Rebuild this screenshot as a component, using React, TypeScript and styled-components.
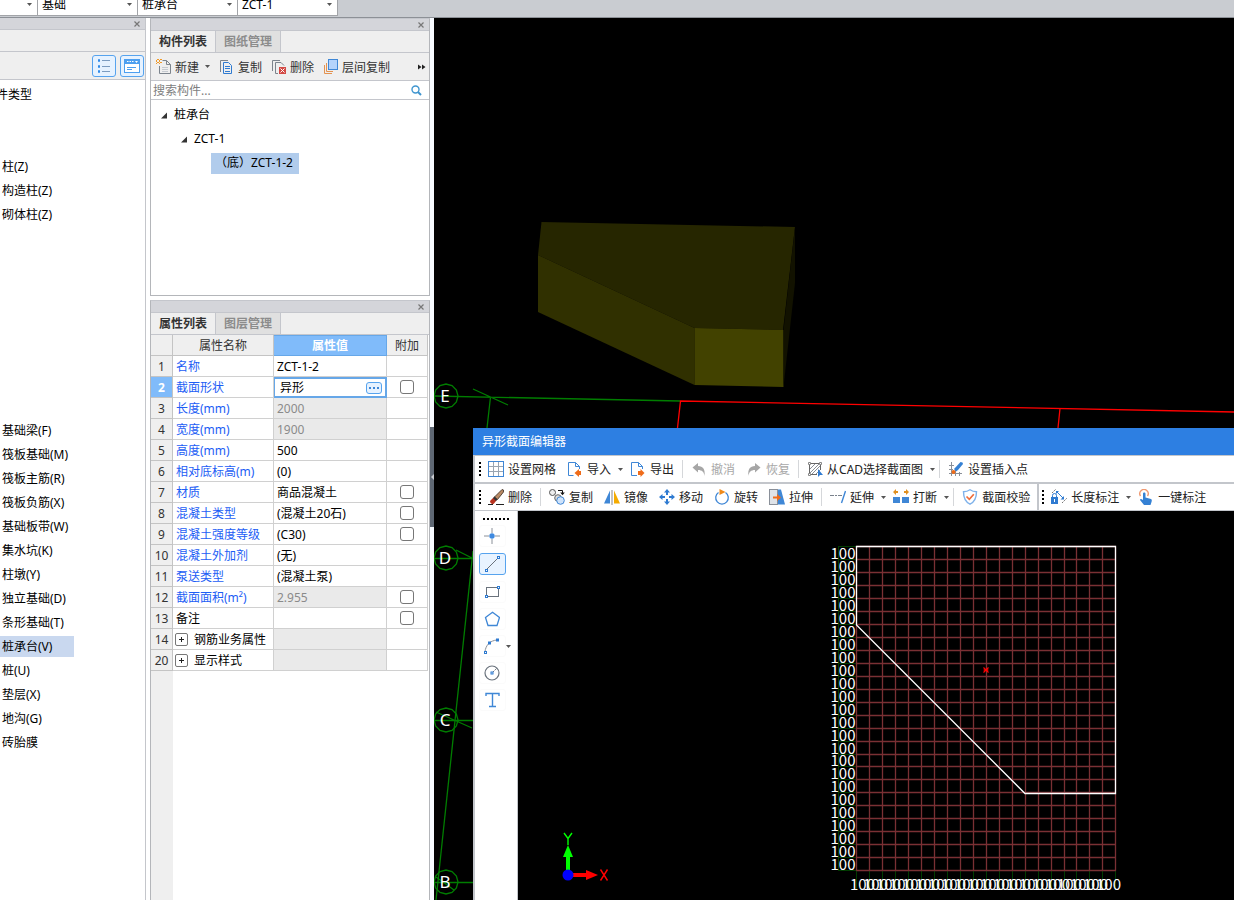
import React from 'react';
import styled, { createGlobalStyle, css } from 'styled-components';

const Global = createGlobalStyle`
  * { box-sizing: border-box; }
  html, body, #root { height: 100%; }
  body {
    margin: 0;
    background: #fff;
    color: #000;
    font: 12px/20px "Noto Sans", "Noto Sans CJK SC", sans-serif;
    overflow: hidden;
  }
  button, select, input { font: inherit; color: inherit; }
`;

const Page = styled.div`
  display: flex;
  flex-direction: column;
  height: 100vh;
`;

const TopBar = styled.header`
  display: flex;
  flex: none;
  height: 18px;
  overflow: hidden;
  background: #c9ccd1;
  border-bottom: 1px solid #8c9096;
`;

const ComboBox = styled.label<{ $narrow?: boolean }>`
  position: relative;
  display: flex;
  flex: none;
  width: ${(p) => (p.$narrow ? 38 : 100)}px;
  height: 22px;
  margin-top: -6px;
  background: #fff;
  border: solid #a2a4a8;
  border-width: 0 1px 1px 0;
  select {
    appearance: none;
    width: 100%;
    padding: 0 14px 0 4px;
    border: 0;
    background: transparent;
    line-height: 20px;
  }
  svg { position: absolute; right: 5px; top: 9px; }
`;

const Workspace = styled.main`
  display: flex;
  flex: 1;
  min-height: 0;
`;

const TypePanel = styled.aside`
  display: flex;
  flex-direction: column;
  flex: none;
  width: 146px;
  border-right: 1px solid #c4c6cb;
  overflow: hidden;
`;

const PanelHead = styled.div`
  display: flex;
  flex: none;
  justify-content: flex-end;
  align-items: center;
  height: 12px;
  padding-right: 4px;
  background: #d4d5da;
  border-bottom: 1px solid #c4c6cc;
`;

const CloseButton = styled.button`
  display: flex;
  padding: 0;
  border: 0;
  background: none;
`;

const TypeStrip = styled.div`
  flex: none;
  height: 22px;
  background: #efefef;
  border-bottom: 1px solid #c4c6cc;
`;

const TypeTools = styled.div`
  display: flex;
  flex: none;
  justify-content: flex-end;
  align-items: center;
  gap: 4px;
  height: 28px;
  padding-right: 1px;
  background: #efefef;
  border-bottom: 1px solid #c4c6cc;
`;

const ViewToggle = styled.button`
  display: flex;
  align-items: center;
  justify-content: center;
  width: 24px;
  height: 22px;
  padding: 0;
  background: #e6f2ff;
  border: 1px solid #56a3ee;
  border-radius: 3px;
`;

const TypeList = styled.ul<{ $space?: number }>`
  flex: none;
  margin: ${(p) => p.$space ?? 0}px 0 0;
  padding: 0;
  list-style: none;
`;

const TypeItem = styled.li<{ $selected?: boolean; $cut?: boolean }>`
  width: 74px;
  height: 21px;
  margin-bottom: 3px;
  padding: 1px 0 0 2px;
  white-space: nowrap;
  background: ${(p) => (p.$selected ? '#c9d8ef' : 'transparent')};
  ${(p) => p.$cut && css`
    padding-left: 0;
    margin-left: -4px;
  `}
`;

const DockColumn = styled.section`
  display: flex;
  flex-direction: column;
  flex: none;
  gap: 4px;
  width: 280px;
  margin-left: 4px;
`;

const Dock = styled.div<{ $fill?: boolean }>`
  display: flex;
  flex-direction: column;
  flex: ${(p) => (p.$fill ? '1' : 'none')};
  min-height: 0;
  border: 1px solid #b4b6ba;
  border-top-color: #c4c6cc;
  ${(p) => p.$fill && css`border-bottom: 0;`}
`;

const Tabs = styled.div`
  display: flex;
  flex: none;
  height: 22px;
  background: #efefef;
  border-bottom: 1px solid #c4c6cc;
`;

const Tab = styled.button<{ $active?: boolean }>`
  width: 65px;
  padding: 1px 0 0;
  border: 0;
  border-right: 1px solid #c4c6cc;
  font-weight: 700;
  line-height: 20px;
  color: ${(p) => (p.$active ? '#333' : '#8c8c8c')};
  background: ${(p) => (p.$active ? '#efefef' : '#e0e0e0')};
`;

const ListTools = styled.div`
  display: flex;
  flex: none;
  align-items: center;
  height: 28px;
  padding-left: 5px;
  background: #efefef;
  border-bottom: 1px solid #c4c6cc;
`;

const ListTool = styled.button`
  display: flex;
  align-items: center;
  gap: 3px;
  margin-right: 9px;
  padding: 0;
  border: 0;
  background: none;
  color: #333;
  white-space: nowrap;
  span { padding-top: 2px; }
  .caret { margin-left: 3px; }
`;

const MoreButton = styled(ListTool)`
  margin: 0 3px 0 auto;
`;

const SearchRow = styled.label`
  display: flex;
  flex: none;
  align-items: center;
  height: 19px;
  padding: 0 7px 0 2px;
  border-bottom: 1px solid #c4c6cc;
  input {
    flex: 1;
    min-width: 0;
    height: 18px;
    padding: 1px 0 0;
    border: 0;
    outline: 0;
    background: transparent;
  }
  input::placeholder { color: #808080; opacity: 1; }
`;

const Tree = styled.ul`
  height: 195px;
  margin: 0;
  padding: 3px 0 0;
  list-style: none;
`;

const TreeItem = styled.li<{ $level: number }>`
  display: flex;
  align-items: center;
  gap: 6px;
  height: 24px;
  padding-left: ${(p) => 10 + p.$level * 20}px;
`;

const TreePick = styled.span`
  height: 21px;
  margin-left: 10px;
  padding: 0 6px 0 4px;
  background: #b1ccec;
`;

const PropertyArea = styled.div`
  flex: 1;
  background: linear-gradient(to right, #efefef 22px, #fff 22px);
`;

const PropertyTable = styled.table`
  width: 277px;
  table-layout: fixed;
  border-collapse: separate;
  border-spacing: 0;
  th, td {
    height: 21px;
    padding: 2px 0 0 3px;
    border: solid #d0d0d0;
    border-width: 0 1px 1px 0;
    line-height: 18px;
    font-weight: 400;
    text-align: left;
    white-space: nowrap;
    overflow: hidden;
  }
  thead th {
    padding: 2px 0 0;
    text-align: center;
    color: #333;
    background: #efefef;
    border-color: #c4c4c4;
  }
`;

const ValueHead = styled.th`
  && {
    color: #fff;
    font-weight: 700;
    background: #80bbfa;
    border-color: #66a7e8;
    box-shadow: inset 0 1px #66a7e8;
  }
`;

const RowNumber = styled.th<{ $selected?: boolean }>`
  && {
    padding: 2px 0 0;
    text-align: center;
    color: ${(p) => (p.$selected ? '#fff' : '#333')};
    font-weight: ${(p) => (p.$selected ? 700 : 400)};
    background: ${(p) => (p.$selected ? '#80bbfa' : '#efefef')};
    border-color: #c4c4c4;
  }
`;

const NameCell = styled.td<{ $plain?: boolean }>`
  color: ${(p) => (p.$plain ? '#000' : '#1c5df5')};
`;

const NameInner = styled.div`
  display: flex;
  align-items: center;
  gap: 6px;
  height: 18px;
`;

const Expander = styled.button`
  display: flex;
  align-items: center;
  justify-content: center;
  width: 13px;
  height: 13px;
  margin: 0 0 2px -1px;
  padding: 0;
  background: #fff;
  border: 1px solid #777;
  border-radius: 2px;
`;

const ValueCell = styled.td<{ $locked?: boolean }>`
  color: ${(p) => (p.$locked ? '#8a8a8a' : '#000')};
  background: ${(p) => (p.$locked ? '#eaeaea' : '#fff')};
`;

const EditCell = styled.td`
  && {
    padding: 0;
    border-color: #66a7e8;
  }
`;

const Editor = styled.div`
  display: flex;
  align-items: center;
  height: 20px;
  padding: 0 3px 0 5px;
  border: solid #66a7e8;
  border-width: 2px 1px 1px;
  input {
    flex: 1;
    min-width: 0;
    height: 16px;
    padding: 0;
    border: 0;
    outline: 0;
  }
  button {
    display: flex;
    align-items: center;
    justify-content: center;
    width: 16px;
    height: 12px;
    padding: 0;
    background: #e6f2ff;
    border: 1px solid #56a3ee;
    border-radius: 3px;
  }
`;

const CheckCell = styled.td`
  && {
    padding: 0;
    background: #fff;
  }
  input {
    appearance: none;
    display: block;
    width: 14px;
    height: 14px;
    margin: 0 auto;
    background: #fff;
    border: 1px solid #777;
    border-radius: 3px;
  }
`;

const Splitter = styled.div`
  flex: none;
  width: 4px;
  padding-top: 409px;
  background: #f7faff;
`;

const SplitHandle = styled.button`
  display: flex;
  align-items: center;
  justify-content: center;
  width: 4px;
  height: 100px;
  padding: 0;
  border: 0;
  background: #5f6874;
`;

const Viewport = styled.section`
  position: relative;
  flex: 1;
  min-width: 0;
  overflow: hidden;
  background: #000;
`;

const Scene = styled.svg`
  display: block;
  width: 100%;
  height: 100%;
`;

const Dialog = styled.section`
  position: absolute;
  top: 410px;
  right: 0;
  bottom: 0;
  left: 39px;
  display: flex;
  flex-direction: column;
  overflow: hidden;
`;

const DialogTitle = styled.h2`
  flex: none;
  height: 27px;
  margin: 0;
  padding-left: 9px;
  color: #fff;
  background: #2d7fe2;
  font-size: 12px;
  font-weight: 400;
  line-height: 28px;
`;

const ToolRow = styled.div`
  display: flex;
  flex: none;
  align-items: stretch;
  height: 28px;
  padding-left: 4px;
  background: #fff;
  border: solid #c3c6cb;
  border-width: 1px 0 1px 2px;
`;

const Grip = styled.span<{ $across?: boolean }>`
  flex: none;
  align-self: center;
  width: ${(p) => (p.$across ? 27 : 2)}px;
  height: ${(p) => (p.$across ? 2 : 14)}px;
  background: repeating-linear-gradient(
    ${(p) => (p.$across ? 'to right' : 'to bottom')},
    #000 0 2px, transparent 2px 4px
  );
  ${ToolRow} > & { margin-right: 1px; }
`;

const ToolButton = styled.button<{ $menu?: boolean }>`
  display: flex;
  flex: none;
  align-items: center;
  gap: 4px;
  padding: 0 ${(p) => (p.$menu ? 1 : 5)}px 0 6px;
  border: 0;
  background: none;
  color: #222;
  white-space: nowrap;
  &:disabled { color: #a8a8a8; }
  span { padding-top: 2px; }
  .caret { margin-left: 3px; }
`;

const ToolSeparator = styled.span`
  flex: none;
  align-self: center;
  width: 1px;
  height: 18px;
  margin: 0 2px 0 3px;
  background: #d5d7da;
`;

const BarEdge = styled.span`
  flex: none;
  width: 2px;
  margin: 0 3px 0 2px;
  background: #c3c6cb;
`;

const DialogBody = styled.div`
  display: flex;
  flex: 1;
  min-height: 0;
`;

const ShapeBar = styled.div`
  display: flex;
  flex: none;
  flex-direction: column;
  gap: 5px;
  width: 45px;
  padding: 7px 0 0 4px;
  background: #fff;
  border: solid #c3c6cb;
  border-width: 0 1px 0 2px;
  ${Grip} { align-self: flex-start; margin-left: 4px; }
`;

const ShapeRow = styled.div<{ $active?: boolean }>`
  display: flex;
  align-items: center;
  margin: ${(p) => (p.$active ? 1 : 0)}px 0;
`;

const ShapeButton = styled.button<{ $active?: boolean }>`
  display: flex;
  align-items: center;
  justify-content: center;
  width: 27px;
  height: 22px;
  padding: 0 2px 0 0;
  border: 1px solid ${(p) => (p.$active ? '#56a3ee' : '#fbfbfb')};
  border-radius: 3px;
  background: ${(p) => (p.$active ? '#e8f3ff' : '#fff')};
`;

const SketchArea = styled.div`
  flex: 1;
  min-width: 0;
  background: #000;
`;

/* ---------- icons ---------- */

const Caret = () => (
  <svg className="caret" width="5" height="3" viewBox="0 0 5 3"><path d="M0 0h5L2.5 3z" fill="#555" /></svg>
);

const CloseIcon = () => (
  <svg width="8" height="8" viewBox="0 0 8 8"><path d="M1.5 1.5l5 5M6.5 1.5l-5 5" stroke="#777" strokeWidth="1.2" /></svg>
);

const TreeArrow = () => (
  <svg width="7" height="7" viewBox="0 0 7 7"><path d="M6 0.5v6H0z" fill="#333" /></svg>
);

const Icon = ({ children }: { children: React.ReactNode }) => (
  <svg width="16" height="16" viewBox="0 0 16 16" fill="none">{children}</svg>
);

const icons: Record<string, React.ReactNode> = {
  grid: <><path d="M1 5.5h14M1 10.5h14M5.5 1v14M10.5 1v14" stroke="#9aa5b1" /><rect x=".5" y=".5" width="15" height="15" stroke="#3f87d6" /></>,
  import: <><path d="M6.5 14.5h-5V1.5h7l4 4V8M8.500 1.500v4h4" stroke="#3f87d6" /><path d="M14 10h-2V8l-4.500 4 4.500 4v-2h2z" fill="#ef6c1a" /></>,
  export: <><path d="M7 14.5H1.5V1.500h7l4 4V8M8.500 1.500v4h4" stroke="#3f87d6" /><path d="M8 10h2.500V8l4 4-4 4v-2H8z" fill="#ef6c1a" /></>,
  undo: <path d="M1.500 6.500L7 2v3c5 0 7.500 3.500 6.500 10-.4-4-2.500-6-6.500-6v2.500z" fill="#a6a6a6" />,
  redo: <path d="M14.500 6.500L9 2v3c-5 0-7.500 3.500-6.500 10 .4-4 2.500-6 6.500-6v2.500z" fill="#a6a6a6" />,
  cad: <><path d="M2.500 3v10M13.500 3v6M3 2.500h10M3 13.500h7" stroke="#666" /><path d="M3 8l5-5M3 12l9-9M5 13l8-8M9 13l4-4" stroke="#8a8f96" /><path d="M1.500 1.500h2v2h-2zM12.500 1.500h2v2h-2zM1.500 12.500h2v2h-2z" fill="#fff" stroke="#888" /><path d="M11 8v8l2-2h3z" fill="#2f7bd1" /></>,
  insert: <><path d="M3.500 1v14M7.500 9v6M11.500 11v4M1 4.500h5M1 8.500h4M1 12.500h13" stroke="#8a9099" /><path d="M14.500 1.500L12.500 1 6 8l2 2.500L10 9l5-6z" fill="#3581d4" /><circle cx="5.500" cy="11" r="2" fill="#ef6c1a" /></>,
  erase: <><path d="M15.500 1L14 .5 6.500 8l3 2.500L15.500 3z" fill="#b98a64" stroke="#3b2c22" strokeWidth=".8" /><path d="M5.500 8.500l3 3-3 3.500C4 15 2 14.500 2 12z" fill="#b8321e" /><path d="M5 9l3 3 1.500-1.500-3-3z" fill="#333" /><path d="M0 15.500h5M8 15.500h8" stroke="#222" /></>,
  copy: <><circle cx="3.500" cy="3.500" r="3" stroke="#555" fill="#eee" /><circle cx="9" cy="9" r="3.300" stroke="#666" fill="#ddd" /><circle cx="11.500" cy="11.500" r="3.800" stroke="#3f87d6" fill="#cfe3fa" /><path d="M9 1.500h4.500V4" stroke="#111" /><path d="M11.200 3.500h4.600l-2.300 2.800z" fill="#111" /></>,
  mirror: <><path d="M6 1.500v13H0z" fill="#3f87d6" /><path d="M10 1.500v13h6z" fill="#f5ab00" /><path d="M8 1v15" stroke="#888" /></>,
  move: <path d="M8 0l3 3.500H9V6H7V3.500H5zM8 16l3-3.500H9V10H7v2.500H5zM0 8l3.500-3v2H6v2H3.500v2zM16 8l-3.500-3v2H10v2h2.500v2z" fill="#2f7bd1" />,
  rotate: <><path d="M11.500 3.500a6.300 6.300 0 1 1-7 0" stroke="#3f87d6" strokeWidth="1.300" /><path d="M5.500 0l6 3L5.500 6z" fill="#ef8a1a" /></>,
  stretch: <><rect x=".5" y=".5" width="8" height="15" stroke="#8a9099" fill="#dfe3e8" /><path d="M9 .5h3l4 15H9z" fill="#3f87d6" /><path d="M4 7.500h4V5l4 3.500L8 12V9.500H4z" fill="#ef6c1a" /></>,
  extend: <><path d="M0 6.500h4M5 6.500h2M8 6.500h4" stroke="#7a828c" /><path d="M15.500 2l-4 12" stroke="#3f87d6" strokeWidth="1.400" /></>,
  break: <><path d="M0 8h7v6H0zM9 8h7v6H9z" fill="#3f87d6" /><path d="M0 3l3-3v2h2v2H3v2zM16 3l-3-3v2h-2v2h2v2z" fill="#e09020" /></>,
  verify: <><path d="M8 .8c2 1.400 4.300 2 6.500 2 0 6-1.500 10-6.500 12.400C3 12.800 1.500 8.800 1.500 2.800 3.700 2.800 6 2.200 8 .8z" stroke="#7fb2ea" strokeWidth="1.400" /><path d="M4.500 7.500L7.300 10.300l4.500-5" stroke="#ef6c3a" strokeWidth="1.700" /></>,
  length: <><path d="M0 8h7v7H0z" fill="#2f7bd1" /><path d="M1.500 8V6.500a2 2 0 0 1 4 0V8" stroke="#2f7bd1" /><path d="M3 10h1v3H3z" fill="#fff" /><path d="M1 4l4-4M11 14l5-5" stroke="#777" strokeDasharray="2 1" /><path d="M6 3l6 6" stroke="#2f7bd1" /><path d="M5 2h3l-3 3zM13 10.500v-3.500l-3.500 3.500z" fill="#2f7bd1" /></>,
  touch: <><path d="M2.500 7A4.200 4.200 0 1 1 9.500 7" stroke="#f09a72" strokeWidth="1.400" /><path d="M5 4.500c0-1.500 2.500-1.500 2.500 0v4l5.500 1.500c1 .5 1 1.500.5 3l-1 3H6L2 11c0-1 1-1.500 3 0z" fill="#3581d4" /></>,
  newFile: <><path d="M6.500 1.500h4l4 4v9h-11V7M10.500 1.500v4h4" stroke="#7c848d" /><path d="M6 8.500h6M6 10.500h6M6 12.500h6" stroke="#c5cad0" /><path d="M1 0h2v1H1zM4 0h2v1H4zM0 1h1v2H0zM3 1h1v2H3zM1 3h2v1H1zM4 3h2v1H4zM0 4h1v1H0zM3 4h1v1H3z" fill="#f09a2a" /></>,
  copyFile: <><path d="M1.500 13V1.500H9" stroke="#7c848d" /><path d="M4.500 3.500h5l3 3v8h-8z" stroke="#2f7bd1" /><path d="M6 7.500h5M6 9.500h5M6 12.500h5" stroke="#2f7bd1" /></>,
  deleteFile: <><path d="M1.500 12V1.500H9" stroke="#7c848d" /><path d="M7 14.500H4.500V3.500h5.500l3 3" stroke="#7c848d" /><path d="M8 8h7v7H8z" fill="#d34a45" /><path d="M9.500 9.500l4 4M13.500 9.500l-4 4" stroke="#fff" /></>,
  layerCopy: <><path d="M1.500 6v8.500H9M3.500 4v8.500H10" stroke="#e39250" /><rect x="5.500" y=".5" width="9" height="10" fill="#b4d3fb" stroke="#3f87d6" /></>,
};

const blueNode = (x: number, y: number) => (
  <rect x={x} y={y} width="2" height="2" fill="#fff" stroke="#2f7bd1" />
);

const shapeIcons: Record<string, React.ReactNode> = {
  point: <><path d="M8 0v5M8 11v5M0 8h5M11 8h5" stroke="#8a9099" /><circle cx="8" cy="8" r="2.700" fill="#3f8ae0" /></>,
  line: <><path d="M2 14L14 2" stroke="#6a727c" />{blueNode(1.500, 13.500)}{blueNode(13.500, .5)}</>,
  rect: <><rect x="2.500" y="3.500" width="12" height="9" stroke="#6a727c" />{blueNode(1.500, 11.500)}{blueNode(13.500, 2.500)}</>,
  polygon: <path d="M8.500 1.200l7 5.300-2.500 8H4l-2.500-8z" stroke="#3f87d6" strokeWidth="1.300" />,
  arc: <><path d="M1 14C1.500 7 6.500 2.500 13 2" stroke="#8a9099" />{blueNode(.5, 13.500)}{blueNode(4.500, 4)}{blueNode(12.500, 1)}</>,
  circle: <><circle cx="8" cy="8" r="7" stroke="#6a727c" strokeWidth="1.200" /><path d="M9 7l4-4" stroke="#6a727c" strokeDasharray="2 1" />{blueNode(7, 7)}</>,
  text: <path d="M2 4V1.500h13V4M8.500 1.500v13M5 14.500h7" stroke="#3f87d6" strokeWidth="1.400" />,
};

/* ---------- data ---------- */

const columnTypes = ['柱(Z)', '构造柱(Z)', '砌体柱(Z)'];
const foundationTypes = [
  '基础梁(F)', '筏板基础(M)', '筏板主筋(R)', '筏板负筋(X)', '基础板带(W)', '集水坑(K)', '柱墩(Y)',
  '独立基础(D)', '条形基础(T)', '桩承台(V)', '桩(U)', '垫层(X)', '地沟(G)', '砖胎膜',
];

type Property = { no: number; name: string; value?: string; check?: boolean; locked?: boolean; plain?: boolean; group?: boolean; edit?: boolean };

const properties: Property[] = [
  { no: 1, name: '名称', value: 'ZCT-1-2' },
  { no: 2, name: '截面形状', value: '异形', check: true, edit: true },
  { no: 3, name: '长度(mm)', value: '2000', locked: true },
  { no: 4, name: '宽度(mm)', value: '1900', locked: true },
  { no: 5, name: '高度(mm)', value: '500' },
  { no: 6, name: '相对底标高(m)', value: '(0)' },
  { no: 7, name: '材质', value: '商品混凝土', check: true },
  { no: 8, name: '混凝土类型', value: '(混凝土20石)', check: true },
  { no: 9, name: '混凝土强度等级', value: '(C30)', check: true },
  { no: 10, name: '混凝土外加剂', value: '(无)' },
  { no: 11, name: '泵送类型', value: '(混凝土泵)' },
  { no: 12, name: '截面面积(m²)', value: '2.955', locked: true, check: true },
  { no: 13, name: '备注', plain: true, check: true },
  { no: 14, name: '钢筋业务属性', plain: true, locked: true, group: true },
  { no: 20, name: '显示样式', plain: true, locked: true, group: true },
];

type Tool = { icon: string; label: string; menu?: boolean; disabled?: boolean } | 'sep' | 'edge';

const fileTools: Tool[] = [
  { icon: 'grid', label: '设置网格' },
  { icon: 'import', label: '导入', menu: true },
  { icon: 'export', label: '导出' },
  'sep',
  { icon: 'undo', label: '撤消', disabled: true },
  { icon: 'redo', label: '恢复', disabled: true },
  'sep',
  { icon: 'cad', label: '从CAD选择截面图', menu: true },
  'sep',
  { icon: 'insert', label: '设置插入点' },
];

const editTools: Tool[] = [
  { icon: 'erase', label: '删除' },
  'sep',
  { icon: 'copy', label: '复制' },
  { icon: 'mirror', label: '镜像' },
  { icon: 'move', label: '移动' },
  { icon: 'rotate', label: '旋转' },
  { icon: 'stretch', label: '拉伸' },
  'sep',
  { icon: 'extend', label: '延伸', menu: true },
  { icon: 'break', label: '打断', menu: true },
  'sep',
  { icon: 'verify', label: '截面校验' },
  'edge',
  { icon: 'length', label: '长度标注', menu: true },
  { icon: 'touch', label: '一键标注' },
];

/* ---------- parts ---------- */

const Combo = ({ value, label, narrow }: { value: string; label: string; narrow?: boolean }) => (
  <ComboBox $narrow={narrow}>
    <select aria-label={label} defaultValue={value}><option>{value}</option></select>
    <Caret />
  </ComboBox>
);

const Head = () => (
  <PanelHead><CloseButton aria-label="关闭"><CloseIcon /></CloseButton></PanelHead>
);

const ToolStrip = ({ tools }: { tools: Tool[] }) => (
  <ToolRow>
    <Grip />
    {tools.map((t, i) => {
      if (t === 'sep') return <ToolSeparator key={i} />;
      if (t === 'edge') return <React.Fragment key={i}><BarEdge /><Grip /></React.Fragment>;
      return (
        <ToolButton key={i} $menu={t.menu} disabled={t.disabled}>
          <Icon>{icons[t.icon]}</Icon>
          <span>{t.label}</span>
          {t.menu && <Caret />}
        </ToolButton>
      );
    })}
  </ToolRow>
);

const PropertyRow = ({ p }: { p: Property }) => (
  <tr>
    <RowNumber scope="row" $selected={p.edit}>{p.no}</RowNumber>
    <NameCell $plain={p.plain}>
      {p.group ? (
        <NameInner>
          <Expander aria-label={`展开${p.name}`}>
            <svg width="7" height="7" viewBox="0 0 7 7"><path d="M3.500 1v5M1 3.500h5" stroke="#222" /></svg>
          </Expander>
          {p.name}
        </NameInner>
      ) : p.name}
    </NameCell>
    {p.edit ? (
      <EditCell>
        <Editor>
          <input aria-label={p.name} defaultValue={p.value} />
          <button aria-label="编辑">
            <svg width="10" height="2" viewBox="0 0 10 2"><path d="M0 0h2v2H0zM4 0h2v2H4zM8 0h2v2H8z" fill="#3f87d6" /></svg>
          </button>
        </Editor>
      </EditCell>
    ) : <ValueCell $locked={p.locked}>{p.value}</ValueCell>}
    <CheckCell>{p.check && <input type="checkbox" aria-label={`附加${p.name}`} />}</CheckCell>
  </tr>
);

const axes = [
  { name: 'E', y: 396 },
  { name: 'D', y: 558 },
  { name: 'C', y: 720 },
  { name: 'B', y: 882 },
];

const bubble = (cx: number, cy: number) =>
  Array.from({ length: 12 }, (_, i) => {
    const a = (i * Math.PI) / 6;
    return `${(cx + 12 * Math.cos(a)).toFixed(1)},${(cy + 12 * Math.sin(a)).toFixed(1)}`;
  }).join(' ');

const ModelView = () => (
  <Scene>
    <g transform="translate(-434 -18)">
      <path d="M541.500 222L795 227 783 330 694.500 328 538 255z" fill="#262600" />
      <path d="M538 255L694.500 328V385L538 312z" fill="#303000" />
      <path d="M694.500 328L783.500 330V387L694.500 385z" fill="#424200" />
      <path d="M795 227V283L783.500 387V330z" fill="#121200" />
      <g stroke="#007d00" strokeWidth="1.300" fill="none">
        {axes.map((a) => <polygon key={a.name} points={bubble(446, a.y)} />)}
        <path d="M434 396L680 401M473 389L508 405M490.500 397L487 428" />
        <path d="M434 558.500H473M456 550L472 558M434 720.500H473M436 712L472 728M434 882.500H473M436 877L454 890" />
        <path d="M473 551L436 900" />
      </g>
      <path d="M1234 412L680.500 401 677.500 428M1060 408.500L1058 428" stroke="#f00" strokeWidth="1.300" fill="none" />
      <g fill="#fff" fontFamily='"Noto Sans", sans-serif' fontSize="17" textAnchor="middle">
        {axes.map((a) => <text key={a.name} x="445" y={a.y + 6}>{a.name}</text>)}
      </g>
    </g>
  </Scene>
);

const GRID = { x: 856.5, y: 546.5, step: 12.97, cols: 20, rows: 25 };

const SectionSketch = () => {
  const right = GRID.x + GRID.step * GRID.cols;
  const bottom = GRID.y + GRID.step * GRID.rows;
  const xs = Array.from({ length: GRID.cols + 1 }, (_, i) => Math.round(GRID.x - 0.5 + i * GRID.step) + 0.5);
  const ys = Array.from({ length: GRID.rows + 1 }, (_, i) => Math.round(GRID.y - 0.5 + i * GRID.step) + 0.5);
  return (
    <Scene>
      <g transform="translate(-518 -511)">
        <g stroke="#003c00">
          {ys.map((y) => <path key={y} d={`M838 ${y}H${GRID.x}`} />)}
          {xs.map((x) => <path key={x} d={`M${x} ${bottom}V890`} />)}
          <path d={`M838.500 ${GRID.y}V${bottom}`} />
        </g>
        <g stroke="#7a3034" strokeWidth="1.300">
          {ys.map((y) => <path key={y} d={`M${GRID.x} ${y}H${right}`} />)}
          {xs.map((x) => <path key={x} d={`M${x} ${GRID.y}V${bottom}`} />)}
        </g>
        <path d="M856.500 546.500H1115.500V793.500H1025L856.500 625z" fill="none" stroke="#fff" strokeWidth="1.300" />
        <path d="M983.500 667.500l5 5M988.500 667.500l-5 5M983.500 670h5" stroke="#f00" strokeWidth="1.200" />
        <g fill="#fff" fontFamily='"Noto Sans CJK SC", sans-serif' fontSize="15" textAnchor="middle">
          {ys.slice(1).map((y) => <text key={y} x="843" y={y - 1}>100</text>)}
          {xs.slice(1).map((x) => <text key={x} x={x - 7} y="890">100</text>)}
        </g>
        <path d="M568 875V856" stroke="#0f0" strokeWidth="4" />
        <path d="M568 875H588" stroke="#f00" strokeWidth="4" />
        <path d="M568 845l5 12h-10z" fill="#0f0" />
        <path d="M598 875l-12-5v10z" fill="#f00" />
        <circle cx="568" cy="875" r="5.500" fill="#00f" />
        <path d="M564 833l4 5.500 4-5.500M568 838v7" stroke="#0f0" fill="none" strokeWidth="1.400" />
        <path d="M600.500 869.500l7 11M607.500 869.500l-7 11" stroke="#f00" strokeWidth="1.400" />
      </g>
    </Scene>
  );
};

const shapeLabels: [string, string][] = [
  ['point', '点'], ['line', '直线'], ['rect', '矩形'], ['polygon', '多边形'], ['arc', '弧线'], ['circle', '圆'], ['text', '文字'],
];

export default function App() {
  return (
    <Page>
      <Global />
      <TopBar>
        <Combo narrow value="" label="楼层" />
        <Combo value="基础" label="构件分类" />
        <Combo value="桩承台" label="构件类型" />
        <Combo value="ZCT-1" label="构件" />
      </TopBar>
      <Workspace>
        <TypePanel>
          <Head />
          <TypeStrip />
          <TypeTools>
            <ViewToggle aria-label="列表视图">
              <Icon>
                <path d="M6 2.500h8M6 8.500h8M6 13.500h8" stroke="#7c9cc0" />
                <path d="M2.500 1.500h1v2h-1zM2.500 7.500h1v2h-1zM2.500 12.500h1v2h-1z" stroke="#2f8ae8" />
              </Icon>
            </ViewToggle>
            <ViewToggle aria-label="窗口视图">
              <Icon>
                <rect x=".5" y="1.500" width="15" height="13" fill="#fff" stroke="#4d9ff0" />
                <path d="M1 2h14v4H1z" fill="#4d9ff0" />
                <path d="M3 3.500h1.500M5.500 3.500H7M8 3.500h1.500" stroke="#fff" />
                <path d="M11 3h3l-1.500 2z" fill="#fff" />
                <path d="M3 9.500h9M3 11.500h5" stroke="#4d9ff0" />
              </Icon>
            </ViewToggle>
          </TypeTools>
          <TypeList $space={4}><TypeItem $cut>件类型</TypeItem></TypeList>
          <TypeList $space={48}>{columnTypes.map((t) => <TypeItem key={t}>{t}</TypeItem>)}</TypeList>
          <TypeList $space={192}>
            {foundationTypes.map((t) => <TypeItem key={t} $selected={t === '桩承台(V)'}>{t}</TypeItem>)}
          </TypeList>
        </TypePanel>

        <DockColumn>
          <Dock>
            <Head />
            <Tabs><Tab $active>构件列表</Tab><Tab>图纸管理</Tab></Tabs>
            <ListTools>
              <ListTool><Icon>{icons.newFile}</Icon><span>新建</span><Caret /></ListTool>
              <ListTool><Icon>{icons.copyFile}</Icon><span>复制</span></ListTool>
              <ListTool><Icon>{icons.deleteFile}</Icon><span>删除</span></ListTool>
              <ListTool><Icon>{icons.layerCopy}</Icon><span>层间复制</span></ListTool>
              <MoreButton aria-label="更多">
                <svg width="8" height="6" viewBox="0 0 8 6"><path d="M0 .5l3.500 2.500L0 5.500zM4 .5l3.500 2.500L4 5.500z" fill="#222" /></svg>
              </MoreButton>
            </ListTools>
            <SearchRow>
              <input aria-label="搜索构件" placeholder="搜索构件..." />
              <svg width="11" height="11" viewBox="0 0 11 11" fill="none"><circle cx="4.500" cy="4.500" r="3.500" stroke="#3f95cf" strokeWidth="1.400" /><path d="M7 7l3 3" stroke="#3f95cf" strokeWidth="2" /></svg>
            </SearchRow>
            <Tree>
              <TreeItem $level={0}><TreeArrow />桩承台</TreeItem>
              <TreeItem $level={1}><TreeArrow />ZCT-1</TreeItem>
              <TreeItem $level={2}><TreePick>（底）ZCT-1-2</TreePick></TreeItem>
            </Tree>
          </Dock>
          <Dock $fill>
            <Head />
            <Tabs><Tab $active>属性列表</Tab><Tab>图层管理</Tab></Tabs>
            <PropertyArea>
              <PropertyTable>
                <colgroup><col width="22" /><col width="101" /><col width="113" /><col width="41" /></colgroup>
                <thead><tr><th /><th>属性名称</th><ValueHead>属性值</ValueHead><th>附加</th></tr></thead>
                <tbody>{properties.map((p) => <PropertyRow key={p.no} p={p} />)}</tbody>
              </PropertyTable>
            </PropertyArea>
          </Dock>
        </DockColumn>

        <Splitter>
          <SplitHandle aria-label="收起面板">
            <svg width="3" height="6" viewBox="0 0 3 6"><path d="M3 0v6L0 3z" fill="#c9ccd1" /></svg>
          </SplitHandle>
        </Splitter>

        <Viewport>
          <ModelView />
          <Dialog aria-label="异形截面编辑器">
            <DialogTitle>异形截面编辑器</DialogTitle>
            <ToolStrip tools={fileTools} />
            <ToolStrip tools={editTools} />
            <DialogBody>
              <ShapeBar>
                <Grip $across />
                {shapeLabels.map(([key, label]) => (
                  <ShapeRow key={key} $active={key === 'line'}>
                    <ShapeButton aria-label={label} $active={key === 'line'}><Icon>{shapeIcons[key]}</Icon></ShapeButton>
                    {key === 'arc' && <Caret />}
                  </ShapeRow>
                ))}
              </ShapeBar>
              <SketchArea><SectionSketch /></SketchArea>
            </DialogBody>
          </Dialog>
        </Viewport>
      </Workspace>
    </Page>
  );
}
